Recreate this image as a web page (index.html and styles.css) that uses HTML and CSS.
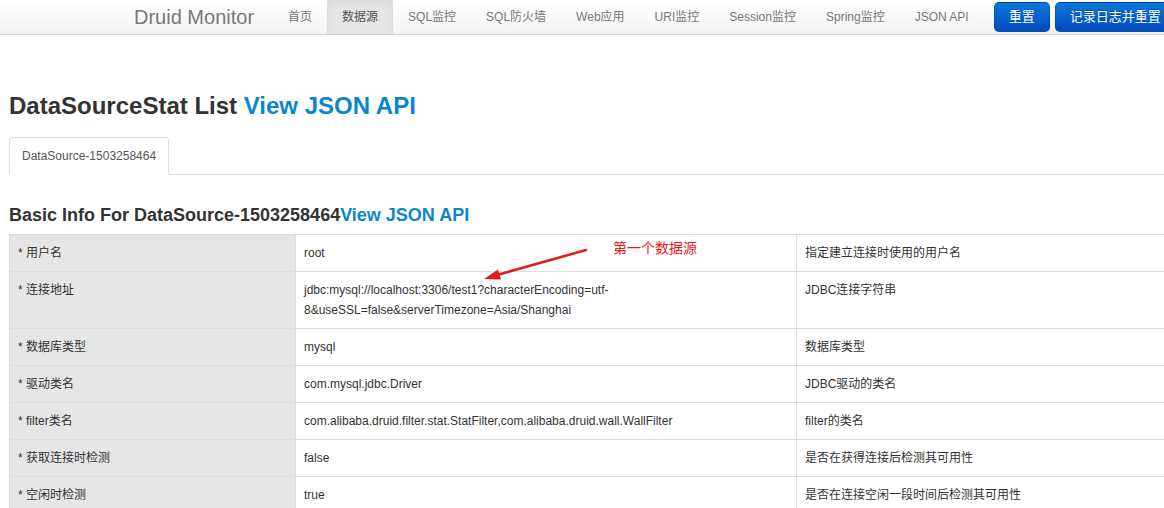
FILE: index.html
```html
<!DOCTYPE html>
<html lang="zh-CN">
<head>
<meta charset="utf-8">
<title>Druid Monitor</title>
<link rel="stylesheet" href="styles.css">
</head>
<body>
<div class="navbar">
  <div class="navbar-inner">
    <a class="brand" href="#">Druid Monitor</a>
    <ul class="nav">
      <li><a href="#">首页</a></li>
      <li class="active"><a href="#">数据源</a></li>
      <li><a href="#">SQL监控</a></li>
      <li><a href="#">SQL防火墙</a></li>
      <li><a href="#">Web应用</a></li>
      <li><a href="#">URI监控</a></li>
      <li><a href="#">Session监控</a></li>
      <li><a href="#">Spring监控</a></li>
      <li><a href="#">JSON API</a></li>
    </ul>
    <div class="actions">
      <a class="btn btn-primary" href="#">重置</a>
      <a class="btn btn-primary" href="#">记录日志并重置</a>
    </div>
  </div>
</div>

<div class="content">
  <h2 class="title">DataSourceStat List <a href="#">View JSON API</a></h2>
  <ul class="tabs">
    <li class="tab active"><a href="#">DataSource-1503258464</a></li>
  </ul>

  <h3 class="subtitle">Basic Info For DataSource-1503258464<a href="#">View JSON API</a></h3>

  <div class="table-wrap">
    <table class="info">
      <colgroup>
        <col class="c1"><col class="c2"><col class="c3">
      </colgroup>
      <tbody>
        <tr><td class="label">* 用户名</td><td>root</td><td>指定建立连接时使用的用户名</td></tr>
        <tr><td class="label">* 连接地址</td><td>jdbc:mysql://localhost:3306/test1?characterEncoding=utf-8&amp;useSSL=false&amp;serverTimezone=Asia/Shanghai</td><td>JDBC连接字符串</td></tr>
        <tr><td class="label">* 数据库类型</td><td>mysql</td><td>数据库类型</td></tr>
        <tr><td class="label">* 驱动类名</td><td>com.mysql.jdbc.Driver</td><td>JDBC驱动的类名</td></tr>
        <tr><td class="label">* filter类名</td><td>com.alibaba.druid.filter.stat.StatFilter,com.alibaba.druid.wall.WallFilter</td><td>filter的类名</td></tr>
        <tr><td class="label">* 获取连接时检测</td><td>false</td><td>是否在获得连接后检测其可用性</td></tr>
        <tr><td class="label">* 空闲时检测</td><td>true</td><td>是否在连接空闲一段时间后检测其可用性</td></tr>
      </tbody>
    </table>
    <svg class="arrow" width="1164" height="80" viewBox="0 230 1164 80" aria-hidden="true">
      <line x1="586" y1="250" x2="497" y2="275" stroke="#e41c1c" stroke-width="2.6" stroke-linecap="round"/>
      <polygon points="484,279 498,269.6 501,279.6" fill="#e41c1c"/>
    </svg>
    <span class="note">第一个数据源</span>
  </div>
</div>
</body>
</html>
```

FILE: styles.css
```css
html, body {
  margin: 0;
  padding: 0;
  overflow: hidden;
  background: #fff;
}
body {
  font-family: "Liberation Sans", Arial, "Noto Sans CJK SC", sans-serif;
  font-size: 12px;
  line-height: 20px;
  color: #333;
  width: 1164px;
  height: 508px;
}
a { text-decoration: none; }

/* navbar */
.navbar {
  height: 35px;
  overflow: hidden;
}
.navbar-inner {
  box-sizing: border-box;
  height: 35px;
  display: flex;
  align-items: stretch;
  padding-left: 114px;
  background: linear-gradient(to bottom, #ffffff, #f2f2f2);
  border-bottom: 1px solid #d4d4d4;
  box-shadow: 0 1px 4px rgba(0, 0, 0, 0.065);
  white-space: nowrap;
}
.brand {
  display: flex;
  align-items: center;
  padding: 0 19px 0 20px;
  font-size: 20px;
  color: #777;
  font-weight: normal;
}
.nav {
  list-style: none;
  margin: 0;
  padding: 0;
  display: flex;
}
.nav li a {
  display: flex;
  align-items: center;
  height: 100%;
  padding: 0 15px;
  color: #777;
  font-size: 12px;
}
.nav li.active a {
  background: #e5e5e5;
  color: #555;
  box-shadow: inset 0 3px 8px rgba(0, 0, 0, 0.06);
}
.actions {
  display: flex;
  gap: 5px;
  margin-left: 10px;
  padding-top: 2px;
}
.btn {
  box-sizing: border-box;
  display: flex;
  align-items: center;
  height: 30px;
  padding: 0 14px;
  font-size: 13px;
  border-radius: 5px;
  color: #fff;
  white-space: nowrap;
}
.btn-primary {
  background: linear-gradient(to bottom, #0a7ad8, #0049c2);
  border: 1px solid rgba(0, 0, 0, 0.15);
  border-bottom-color: rgba(0, 0, 0, 0.3);
  text-shadow: 0 -1px 0 rgba(0, 0, 0, 0.25);
}

/* content */
.content {
  padding: 0 0 0 9px;
}
.title {
  margin: 51px 0 11px;
  font-size: 24px;
  line-height: 40px;
  font-weight: bold;
  color: #333;
}
.title a, .subtitle a { color: #0a87cc; }

.tabs {
  list-style: none;
  margin: 0;
  padding: 0;
  display: flex;
  border-bottom: 1px solid #ddd;
}
.tab {
  margin-bottom: -1px;
}
.tab a {
  display: block;
  padding: 8px 12px;
  line-height: 20px;
  font-size: 12px;
  color: #555;
  border: 1px solid #ddd;
  border-bottom-color: transparent;
  border-radius: 4px 4px 0 0;
  background: #fff;
}

.subtitle {
  margin: 30px 0 9px;
  font-size: 18px;
  line-height: 20px;
  font-weight: bold;
  color: #333;
}

.table-wrap {
  position: relative;
}
.info {
  border-collapse: collapse;
  table-layout: fixed;
  width: 1200px;
}
.info col.c1 { width: 286px; }
.info col.c2 { width: 501px; }
.info td {
  border: 1px solid #ddd;
  padding: 8px;
  vertical-align: top;
  font-size: 12px;
  line-height: 20px;
  color: #333;
  text-align: left;
}
.info td.label {
  background: #e6e6e6;
}

.arrow {
  position: absolute;
  left: -9px;
  top: -4px;
  overflow: visible;
  pointer-events: none;
}
.note {
  position: absolute;
  left: 604px;
  top: 3px;
  font-size: 14px;
  line-height: 20px;
  color: #e41c1c;
  font-family: "Noto Sans CJK SC", sans-serif;
}
```
